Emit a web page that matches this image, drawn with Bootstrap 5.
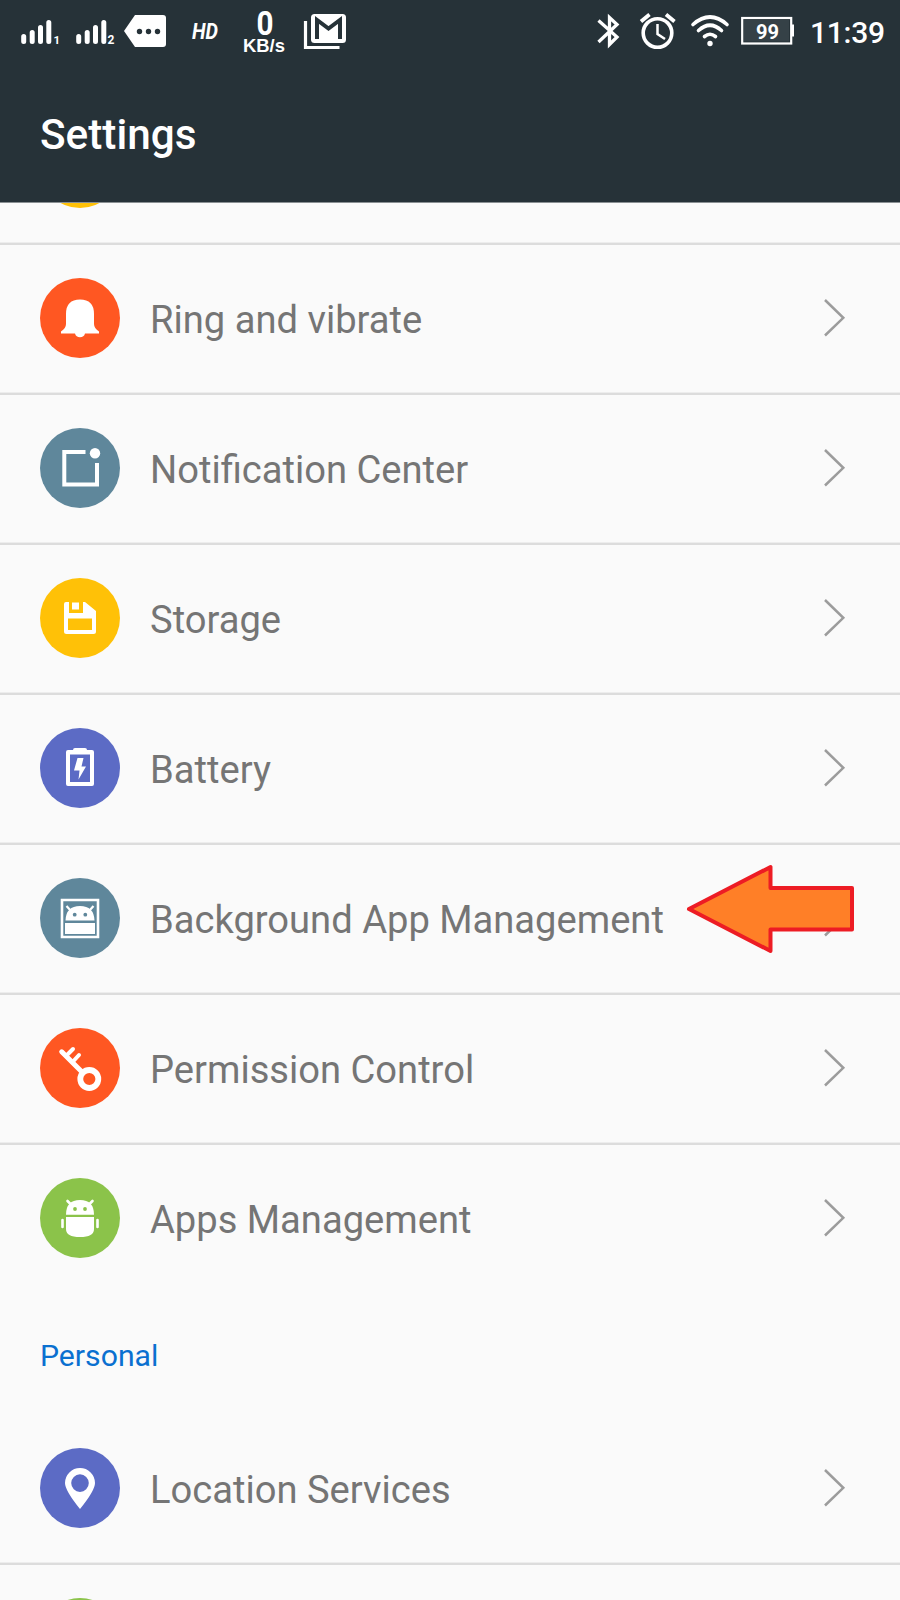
<!DOCTYPE html>
<html lang="en">
<head>
<meta charset="utf-8">
<meta name="viewport" content="width=device-width, initial-scale=1">
<title>Settings</title>
<link href="https://cdn.jsdelivr.net/npm/bootstrap@5.3.0/dist/css/bootstrap.min.css" rel="stylesheet">
<style>
  body { font-family: Roboto, "Noto Sans", sans-serif; background: #fafafa; }
  .screen { width: 900px; height: 1600px; }
  .app-header { background: #263238; height: 203px; color: #fff; border-bottom: 1px solid #8a9093; }
  .status-bar { height: 70px; }
  .screen-title { font-size: 42.3px; font-weight: 500; line-height: 50px; padding: 40px 0 0 40px; }
  .list-group-flush > .setting { height: 150px; padding: 0 50px 2px 40px; border: 0 solid #dcdcdc; border-bottom-width: 2px !important; box-shadow: inset 0 -1px #ededed; background: transparent; }
  .list-group-flush > .setting.last { border-bottom-color: transparent; box-shadow: none; }
  .list-group-flush > .setting.cut-top { height: 42px; padding: 0 0 35px 40px; }
  .list-group-flush > .setting.cut-bottom { height: 37px; padding: 33px 0 0 40px; box-shadow: none; }
  .setting .label { color: #757575; font-size: 38.13px; line-height: 46px; margin-left: 30px; padding-top: 3px; white-space: nowrap; }
  .disc { width: 80px; height: 80px; flex: none; display: block; }
  .chev { width: 30px; height: 44px; flex: none; display: block; }
  .section-name { color: #0a70d0; font-size: 30.2px; height: 120px; padding: 43px 0 0 40px; line-height: 36px; }
  .pointer-arrow { left: 685px; top: 15px; }
</style>
</head>
<body>
<main class="screen overflow-hidden d-flex flex-column">
  <header class="app-header flex-shrink-0">
    <div class="status-bar d-flex justify-content-between">
      <svg width="360" height="70" fill="#fff">
        <g stroke="#fff" stroke-width="5" stroke-linecap="round">
          <path d="M23.7 36.5V41.5M32.2 32.5V41.5M40.5 27.5V41.5M48.8 22.5V41.5"/>
          <path d="M78.700 36.500V41.500M87.200 32.500V41.500M95.500 27.500V41.500M103.800 22.500V41.500"/>
        </g>
        <text x="53.500" y="44" font-size="11.500" font-weight="700">1</text>
        <text x="107.500" y="44" font-size="12" font-weight="700">2</text>
        <path d="M135 15H163Q166 15 166 18V44Q166 47 163 47H135L124 31Z"/>
        <g fill="#263238"><circle cx="139.500" cy="31.500" r="2.700"/><circle cx="148.500" cy="31.500" r="2.700"/><circle cx="157.500" cy="31.500" r="2.700"/></g>
        <text x="192" y="38.500" font-size="21.500" font-weight="700" font-style="italic" textLength="26" lengthAdjust="spacingAndGlyphs">HD</text>
        <text x="256.500" y="34.500" font-size="33" font-weight="700" textLength="17" lengthAdjust="spacingAndGlyphs">0</text>
        <text x="243" y="52" font-family="Liberation Sans" font-size="18.500" font-weight="700" textLength="42" lengthAdjust="spacingAndGlyphs">KB/s</text>
        <path d="M305.500 21V47.500H339.500" fill="none" stroke="#fff" stroke-width="3.200"/>
        <rect x="311" y="14" width="35" height="29" rx="3.500"/>
        <path d="M317 39V20L328.500 28.500L340 20V39" fill="none" stroke="#263238" stroke-width="4"/>
      </svg>
      <svg width="320" height="70" fill="#fff">
        <path d="M18.500 20.500L37 37L29.500 44.500V17.500L37 24.500L18.500 42" fill="none" stroke="#fff" stroke-width="3.300"/>
        <g fill="none" stroke="#fff">
          <circle cx="77.500" cy="33" r="14.300" stroke-width="3.600"/>
          <path d="M77.500 24V34L85 39" stroke-width="2.500"/>
          <path d="M61 21.500L69.500 14.500M86 14.500L94.500 21.500" stroke-width="3.800"/>
          <path d="M113 24.500Q130 9.500 147 24.500M118.500 30.500Q130 20 141.500 30.500M124.500 36.500Q130 32 135.500 36.500" stroke-width="3.600" stroke-linecap="round"/>
          <rect x="162.200" y="18" width="49" height="25.500" stroke-width="2.200"/>
        </g>
        <rect x="164" y="20" width="45" height="21.500" fill="#354147"/>
        <circle cx="130" cy="43.500" r="2.700"/>
        <path d="M211 24.500H214V36.500H211Z"/>
        <text x="176" y="39" font-size="20" font-weight="700" textLength="23" lengthAdjust="spacingAndGlyphs">99</text>
        <text x="230" y="43" font-size="30" font-weight="500" textLength="75" lengthAdjust="spacing">11:39</text>
      </svg>
    </div>
    <h1 class="screen-title m-0">Settings</h1>
  </header>

  <div class="list-group list-group-flush flex-shrink-0">
    <div class="list-group-item setting cut-top d-flex align-items-end overflow-hidden">
      <svg class="disc"><circle cx="40" cy="40" r="40" fill="#ffc107"/></svg>
    </div>

    <div class="list-group-item setting d-flex align-items-center">
      <svg class="disc" fill="#fff"><circle cx="40" cy="40" r="40" fill="#ff5722"/>
        <path d="M26 36Q26 21.500 40 21.500T54 36V46Q54 50 59 53.500V55.500H45Q44 59.300 40 59.300T35 55.500H21V53.500Q26 50 26 46Z"/></svg>
      <span class="label flex-grow-1">Ring and vibrate</span>
      <svg class="chev"><path d="M5 4L23.300 21.800L5 39.500" fill="none" stroke="#9c9c9c" stroke-width="2.500"/></svg>
    </div>

    <div class="list-group-item setting d-flex align-items-center">
      <svg class="disc" fill="#fff"><circle cx="40" cy="40" r="40" fill="#5f879b"/>
        <path d="M45.500 24H24.300V56.500H57V35" fill="none" stroke="#fff" stroke-width="4"/><circle cx="55" cy="25.300" r="5.200"/></svg>
      <span class="label flex-grow-1">Notification Center</span>
      <svg class="chev"><path d="M5 4L23.300 21.800L5 39.500" fill="none" stroke="#9c9c9c" stroke-width="2.500"/></svg>
    </div>

    <div class="list-group-item setting d-flex align-items-center">
      <svg class="disc" fill="#fff"><circle cx="40" cy="40" r="40" fill="#ffc107"/>
        <path fill-rule="evenodd" d="M26 24H29V35H43V24H45L56 33V53.500Q56 56 53.500 56H26.500Q24 56 24 53.500V26Q24 24 26 24ZM28 40.500V52H52V40.500Z"/><rect x="32" y="24.500" width="7" height="7"/></svg>
      <span class="label flex-grow-1">Storage</span>
      <svg class="chev"><path d="M5 4L23.300 21.800L5 39.500" fill="none" stroke="#9c9c9c" stroke-width="2.500"/></svg>
    </div>

    <div class="list-group-item setting d-flex align-items-center">
      <svg class="disc" fill="#fff"><circle cx="40" cy="40" r="40" fill="#5c6bc5"/>
        <path fill-rule="evenodd" d="M33 22Q33 20 35 20H45Q47 20 47 22H52Q54 22 54 24V56Q54 58 52 58H28Q26 58 26 56V24Q26 22 28 22ZM30 26.500V54H50V26.500Z"/>
        <path d="M37.500 30H43.500L41.500 38.500H46L38.500 51.500L39.500 42.500H34Z"/></svg>
      <span class="label flex-grow-1">Battery</span>
      <svg class="chev"><path d="M5 4L23.300 21.800L5 39.500" fill="none" stroke="#9c9c9c" stroke-width="2.500"/></svg>
    </div>

    <div class="list-group-item setting d-flex align-items-center position-relative">
      <svg class="disc" fill="#fff"><circle cx="40" cy="40" r="40" fill="#5f879b"/>
        <path d="M22 22H58V59H22Z" fill="none" stroke="#fff" stroke-width="2.600"/>
        <path d="M25.500 42.500Q26 28 40 28T54.500 42.500ZM25 45H55V56H25Z"/>
        <path d="M26.500 28L31 33M53.500 28L49 33" stroke="#fff" stroke-width="2.200"/>
        <g fill="#5f879b"><circle cx="34.700" cy="36.700" r="1.900"/><circle cx="45.300" cy="36.700" r="1.900"/></g></svg>
      <span class="label flex-grow-1">Background App Management</span>
      <svg class="chev"><path d="M5 4L23.300 21.800L5 39.500" fill="none" stroke="#9c9c9c" stroke-width="2.500"/></svg>
      <!-- callout arrow lying over the row's chevron -->
      <svg class="pointer-arrow position-absolute" width="172" height="96">
        <path d="M4 49L85.500 7V28H167V69.500H85.500V91Z" fill="#ff7f27" stroke="#ed1c24" stroke-width="4" stroke-linejoin="round"/></svg>
    </div>

    <div class="list-group-item setting d-flex align-items-center">
      <svg class="disc" fill="none" stroke="#fff"><circle cx="40" cy="40" r="40" fill="#ff5722" stroke="none"/>
        <circle cx="49.300" cy="51" r="9" stroke-width="5.800"/>
        <path d="M21.700 23.800L42.500 44.500" stroke-width="5" stroke-linecap="round"/><path d="M27 27L33 21M33.500 33L39 27" stroke-width="4" stroke-linecap="round"/></svg>
      <span class="label flex-grow-1">Permission Control</span>
      <svg class="chev"><path d="M5 4L23.300 21.800L5 39.500" fill="none" stroke="#9c9c9c" stroke-width="2.500"/></svg>
    </div>

    <div class="list-group-item setting last d-flex align-items-center">
      <svg class="disc" fill="#fff"><circle cx="40" cy="40" r="40" fill="#8bc34a"/>
        <path d="M26 36.700Q26 22 40 22T54 36.700ZM26 39H54V51Q54 59 40 59T26 51Z"/>
        <path d="M27.500 23L31 26.500M52.500 23L49 26.500M22.500 42V49M57.500 42V49" stroke="#fff" stroke-width="2.600" stroke-linecap="round"/>
        <g fill="#8bc34a"><circle cx="35" cy="31" r="1.900"/><circle cx="45" cy="31" r="1.900"/></g></svg>
      <span class="label flex-grow-1">Apps Management</span>
      <svg class="chev"><path d="M5 4L23.300 21.800L5 39.500" fill="none" stroke="#9c9c9c" stroke-width="2.500"/></svg>
    </div>
  </div>

  <h2 class="section-name m-0 fw-normal flex-shrink-0">Personal</h2>

  <div class="list-group list-group-flush flex-shrink-0">
    <div class="list-group-item setting d-flex align-items-center">
      <svg class="disc" fill="#fff"><circle cx="40" cy="40" r="40" fill="#5c6bc5"/>
        <path fill-rule="evenodd" d="M40 61Q25 42.500 25 35A15 15 0 0 1 55 35Q55 42.500 40 61ZM40 26.300A8.800 8.800 0 1 0 40 43.900A8.800 8.800 0 1 0 40 26.300Z"/></svg>
      <span class="label flex-grow-1">Location Services</span>
      <svg class="chev"><path d="M5 4L23.300 21.800L5 39.500" fill="none" stroke="#9c9c9c" stroke-width="2.500"/></svg>
    </div>
    <div class="list-group-item setting cut-bottom d-flex overflow-hidden">
      <svg class="disc"><circle cx="40" cy="40" r="40" fill="#8bc34a"/></svg>
    </div>
  </div>
</main>
<script src="https://cdn.jsdelivr.net/npm/bootstrap@5.3.0/dist/js/bootstrap.bundle.min.js"></script>
</body>
</html>
